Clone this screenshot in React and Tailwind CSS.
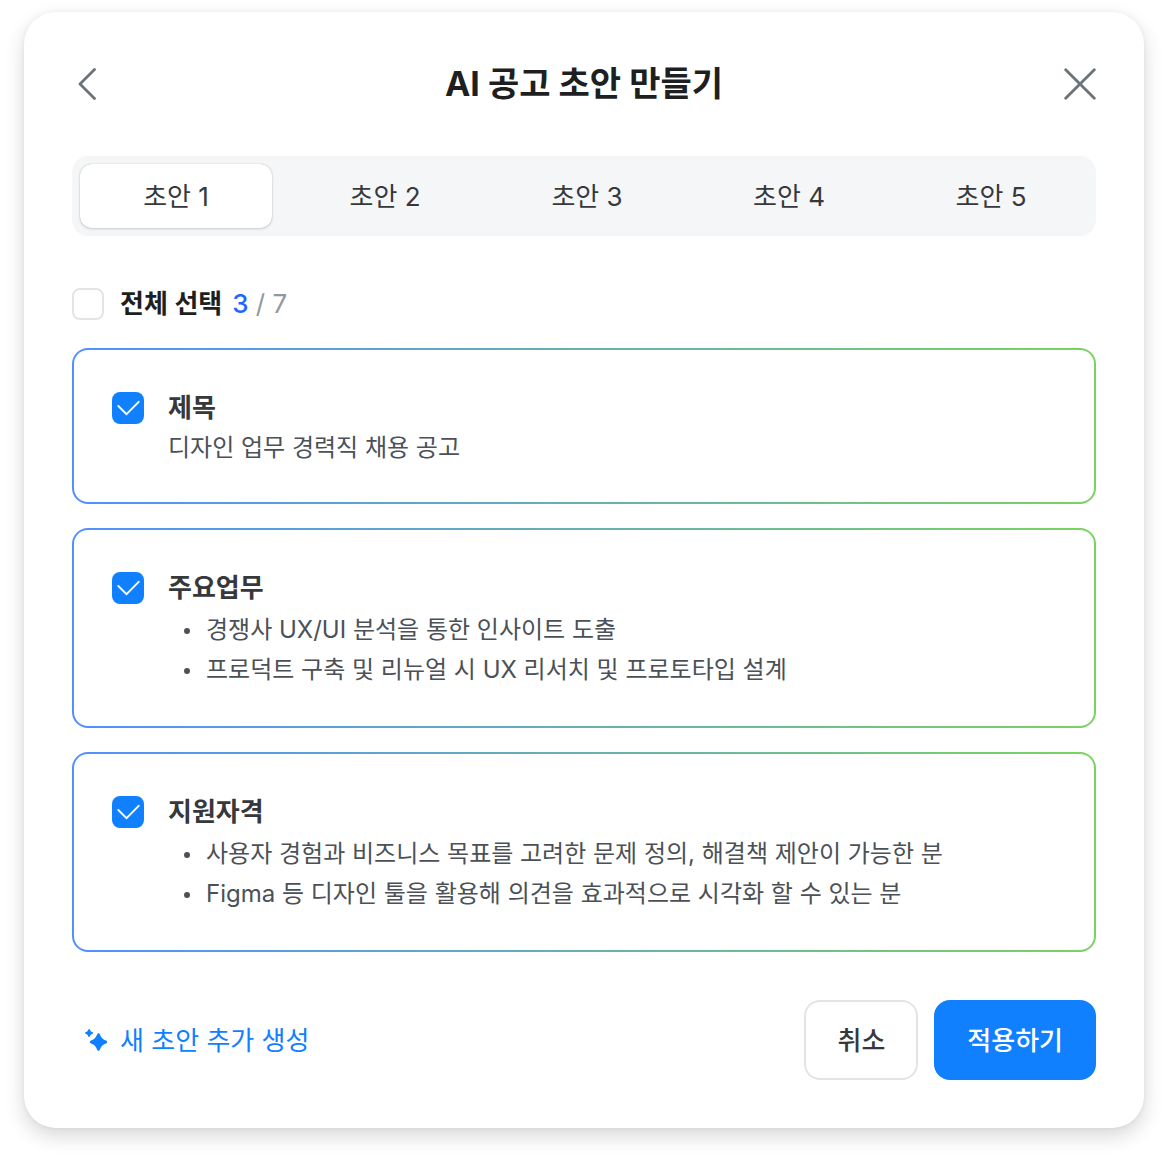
import { useState } from 'react';

const TABS = ['초안 1', '초안 2', '초안 3', '초안 4', '초안 5'];
const TOTAL = 7;

const SECTIONS = [
  { id: 'title', label: '제목', text: '디자인 업무 경력직 채용 공고' },
  {
    id: 'tasks',
    label: '주요업무',
    items: ['경쟁사 UX/UI 분석을 통한 인사이트 도출', '프로덕트 구축 및 리뉴얼 시 UX 리서치 및 프로토타입 설계'],
  },
  {
    id: 'qualifications',
    label: '지원자격',
    items: [
      '사용자 경험과 비즈니스 목표를 고려한 문제 정의, 해결책 제안이 가능한 분',
      'Figma 등 디자인 툴을 활용해 의견을 효과적으로 시각화 할 수 있는 분',
    ],
  },
];

function Checkbox({ id, checked, onChange }) {
  return (
    <span className="grid size-8 shrink-0">
      <input
        id={id}
        type="checkbox"
        checked={checked}
        onChange={onChange}
        className="col-start-1 row-start-1 size-8 cursor-pointer appearance-none rounded-lg border-2 border-[#e4e4e5] bg-white checked:border-[#1080ff] checked:bg-[#1080ff]"
      />
      {checked && (
        <svg viewBox="0 0 32 32" fill="none" className="pointer-events-none col-start-1 row-start-1 size-8" aria-hidden="true">
          <path d="M6.3 14 14.5 22.2 26.7 9.8" stroke="white" strokeWidth="1.9" strokeLinecap="round" />
        </svg>
      )}
    </span>
  );
}

function SectionCard({ section, checked, onToggle }) {
  return (
    <li className="flex gap-6 rounded-2xl border-2 border-transparent px-[38px] pt-[38px] pb-9 [background:linear-gradient(white,white)_padding-box,linear-gradient(90deg,#528fff,#7ad35f)_border-box]">
      <div className="flex h-10 items-center">
        <Checkbox id={section.id} checked={checked} onChange={onToggle} />
      </div>
      <div className="min-w-0 flex-1">
        <label htmlFor={section.id} className="block text-[26px] leading-10 font-semibold text-[#36383b]">
          {section.label}
        </label>
        {section.text && <p className="mt-0.5 text-2xl leading-9 text-[#4b5157]">{section.text}</p>}
        {section.items && (
          <ul className="mt-0.5 text-2xl leading-10 text-[#4b5157]">
            {section.items.map((item) => (
              <li key={item} className="flex gap-4 pl-4">
                <span className="mt-[18px] size-1.5 shrink-0 rounded-full bg-[#4b5157]" />
                <span>{item}</span>
              </li>
            ))}
          </ul>
        )}
      </div>
    </li>
  );
}

export default function App() {
  const [tab, setTab] = useState(0);
  const [selected, setSelected] = useState(['title', 'tasks', 'qualifications']);

  const toggle = (id) =>
    setSelected(selected.includes(id) ? selected.filter((s) => s !== id) : [...selected, id]);

  return (
    <div className="bg-white pt-3 pr-[25px] pb-9 pl-6 font-[Inter,'Noto_Sans_CJK_KR',sans-serif]">
      <main className="rounded-[32px] bg-white p-12 shadow-[0_8px_20px_rgba(0,0,0,0.16),0_0_4px_rgba(0,0,0,0.06)]">
        <header className="flex h-12 items-center justify-between">
          <button type="button" aria-label="뒤로" className="size-8 cursor-pointer text-[#6b7378]">
            <svg viewBox="0 0 32 32" fill="none" className="size-8" aria-hidden="true">
              <path d="M22.5 1.5 8 16l14.5 14.5" stroke="currentColor" strokeWidth="2.8" strokeLinecap="round" strokeLinejoin="round" />
            </svg>
          </button>
          <h1 className="text-[34px] leading-12 font-bold text-[#1e1f21]">AI 공고 초안 만들기</h1>
          <button type="button" aria-label="닫기" className="size-8 cursor-pointer text-[#6b7378]">
            <svg viewBox="0 0 32 32" fill="none" className="size-8" aria-hidden="true">
              <path d="m1.7 1.7 28.6 28.6m0-28.6L1.7 30.3" stroke="currentColor" strokeWidth="2.8" strokeLinecap="round" />
            </svg>
          </button>
        </header>

        <div role="tablist" className="mt-12 flex rounded-2xl bg-[#f4f6f8] py-2 pr-1 pl-2">
          {TABS.map((name, i) => (
            <button
              key={name}
              type="button"
              role="tab"
              aria-selected={tab === i}
              onClick={() => setTab(i)}
              className={`h-16 cursor-pointer rounded-xl text-[26px] text-[#36383b] ${
                i === 0 ? 'mr-3 w-48' : 'flex-1'
              } ${tab === i ? 'bg-white shadow-[0_1px_3px_rgba(0,0,0,0.16),0_0_1px_rgba(0,0,0,0.3)]' : ''}`}
            >
              {name}
            </button>
          ))}
        </div>

        <div className="mt-12 flex h-10 items-center gap-4">
          <Checkbox
            id="all"
            checked={selected.length === TOTAL}
            onChange={() => setSelected(selected.length === SECTIONS.length ? [] : SECTIONS.map((s) => s.id))}
          />
          <p className="flex gap-2.5 text-[26px] leading-10">
            <label htmlFor="all" className="font-semibold text-[#1e1f21]">전체 선택</label>
            <span className="text-[#92989d]">
              <span className="font-medium text-[#2066ff]">{selected.length}</span> / {TOTAL}
            </span>
          </p>
        </div>

        <ul className="mt-6 flex flex-col gap-6">
          {SECTIONS.map((section) => (
            <SectionCard
              key={section.id}
              section={section}
              checked={selected.includes(section.id)}
              onToggle={() => toggle(section.id)}
            />
          ))}
        </ul>

        <footer className="mt-12 flex items-center gap-4 text-[26px]">
          <button type="button" className="mr-auto flex cursor-pointer items-center gap-3 pl-3 text-[#1080ff]">
            <svg viewBox="0 0 24 24" fill="currentColor" className="size-6" aria-hidden="true">
              <path d="M14.5 5.3c.7 0 1.1.5 1.4 1.3 1.2 3.2 2.8 4.8 6 6 .8.3 1.3.7 1.3 1.4s-.5 1.1-1.3 1.4c-3.2 1.2-4.8 2.8-6 6-.3.8-.7 1.3-1.4 1.3s-1.1-.5-1.4-1.3c-1.2-3.2-2.8-4.8-6-6-.8-.3-1.3-.7-1.3-1.4s.5-1.1 1.3-1.4c3.2-1.2 4.8-2.8 6-6 .3-.8.7-1.3 1.4-1.3Z" />
              <path d="M5.1.9c.5 0 .8.3 1 1C6.5 3.1 7 3.6 8.2 4c.7.2 1 .5 1 1s-.3.8-1 1C7 6.4 6.5 6.9 6.1 8.1c-.2.7-.5 1-1 1s-.8-.3-1-1C3.7 6.9 3.2 6.4 2 6c-.7-.2-1-.5-1-1s.3-.8 1-1c1.2-.4 1.7-.9 2.1-2.1.2-.7.5-1 1-1Z" />
            </svg>
            새 초안 추가 생성
          </button>
          <button type="button" className="h-20 cursor-pointer rounded-2xl border-2 border-[#e4e4e5] px-[31px] font-medium text-[#36383b]">
            취소
          </button>
          <button type="button" className="h-20 cursor-pointer rounded-2xl bg-[#1080ff] px-[33px] font-medium text-white">
            적용하기
          </button>
        </footer>
      </main>
    </div>
  );
}
